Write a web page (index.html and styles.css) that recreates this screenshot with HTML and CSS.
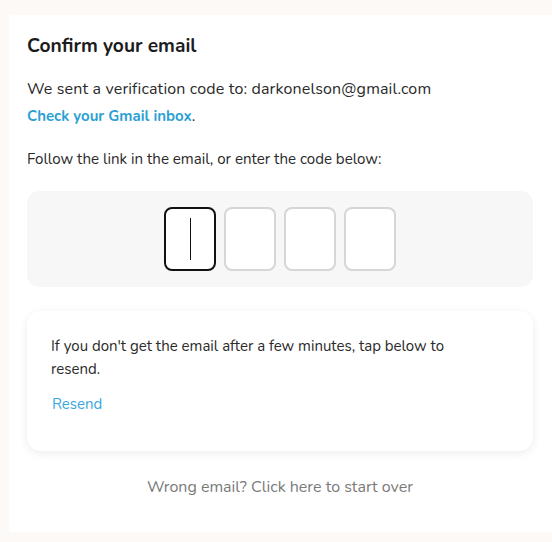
FILE: index.html
```html
<!DOCTYPE html>
<html>
<head>
<meta charset="utf-8">
<link rel="stylesheet" href="styles.css">
</head>
<body>
<main class="panel">
  <h1 class="title">Confirm your email</h1>
  <p class="sent">We sent a verification code to: darkonelson@gmail.com</p>
  <p class="inbox"><a class="link" href="#">Check your Gmail inbox</a>.</p>
  <p class="follow">Follow the link in the email, or enter the code below:</p>
  <div class="code-area">
    <div class="digit active"><span class="caret"></span></div>
    <div class="digit"></div>
    <div class="digit"></div>
    <div class="digit"></div>
  </div>
  <section class="card">
    <p class="card-text">If you don't get the email after a few minutes, tap below to resend.</p>
    <a class="resend" href="#">Resend</a>
  </section>
  <p class="wrong">Wrong email? Click here to start over</p>
</main>
</body>
</html>
```
FILE: styles.css
```css
html, body {
  margin: 0;
  padding: 0;
}
body {
  background: #fcf9f7;
  font-family: "Nunito", "Lato", "Noto Sans", sans-serif;
  color: #222;
  width: 552px;
  height: 542px;
  overflow: hidden;
}
.panel {
  margin: 15px 0 0 9px;
  height: 517px;
  background: #fff;
  padding: 18px 19px 0 18px;
  box-sizing: border-box;
}
.title {
  margin: 0;
  font-size: 19.2px;
  font-weight: 700;
  color: #1c1c1c;
  line-height: 26px;
}
.sent {
  margin: 19px 0 0;
  font-size: 16px;
  letter-spacing: 0.15px;
  line-height: 22px;
  color: #2a2a2a;
}
.inbox {
  margin: 5px 0 0;
  font-size: 16px;
  line-height: 22px;
  color: #2a2a2a;
}
.link {
  color: #2c9fd4;
  font-weight: 700;
  font-size: 15px;
  text-decoration: none;
}
.follow {
  margin: 21px 0 0;
  font-size: 15.1px;
  line-height: 22px;
  color: #2a2a2a;
}
.code-area {
  margin-top: 21px;
  height: 96px;
  background: #f7f7f7;
  border-radius: 12px;
  display: flex;
  justify-content: center;
  align-items: center;
  gap: 8px;
}
.digit {
  width: 52px;
  height: 64px;
  box-sizing: border-box;
  border: 2px solid #d6d6d6;
  border-radius: 8px;
  background: #fff;
  display: flex;
  align-items: center;
  justify-content: center;
}
.digit.active {
  border-color: #111;
}
.caret {
  width: 1px;
  height: 42px;
  background: #111;
}
.card {
  margin-top: 24px;
  height: 140px;
  box-sizing: border-box;
  background: #fff;
  border-radius: 14px;
  box-shadow: 0 2px 10px rgba(0,0,0,0.08);
  padding: 24px 24px 0 24px;
}
.card-text {
  margin: 0;
  max-width: 420px;
  font-size: 15px;
  line-height: 23px;
  color: #2a2a2a;
}
.resend {
  display: inline-block;
  margin: 12px 0 0 1px;
  font-size: 15px;
  line-height: 22px;
  color: #39a7db;
  text-decoration: none;
}
.wrong {
  margin: 25px 0 0;
  text-align: center;
  font-size: 16px;
  line-height: 22px;
  color: #7a7a7a;
}
```
